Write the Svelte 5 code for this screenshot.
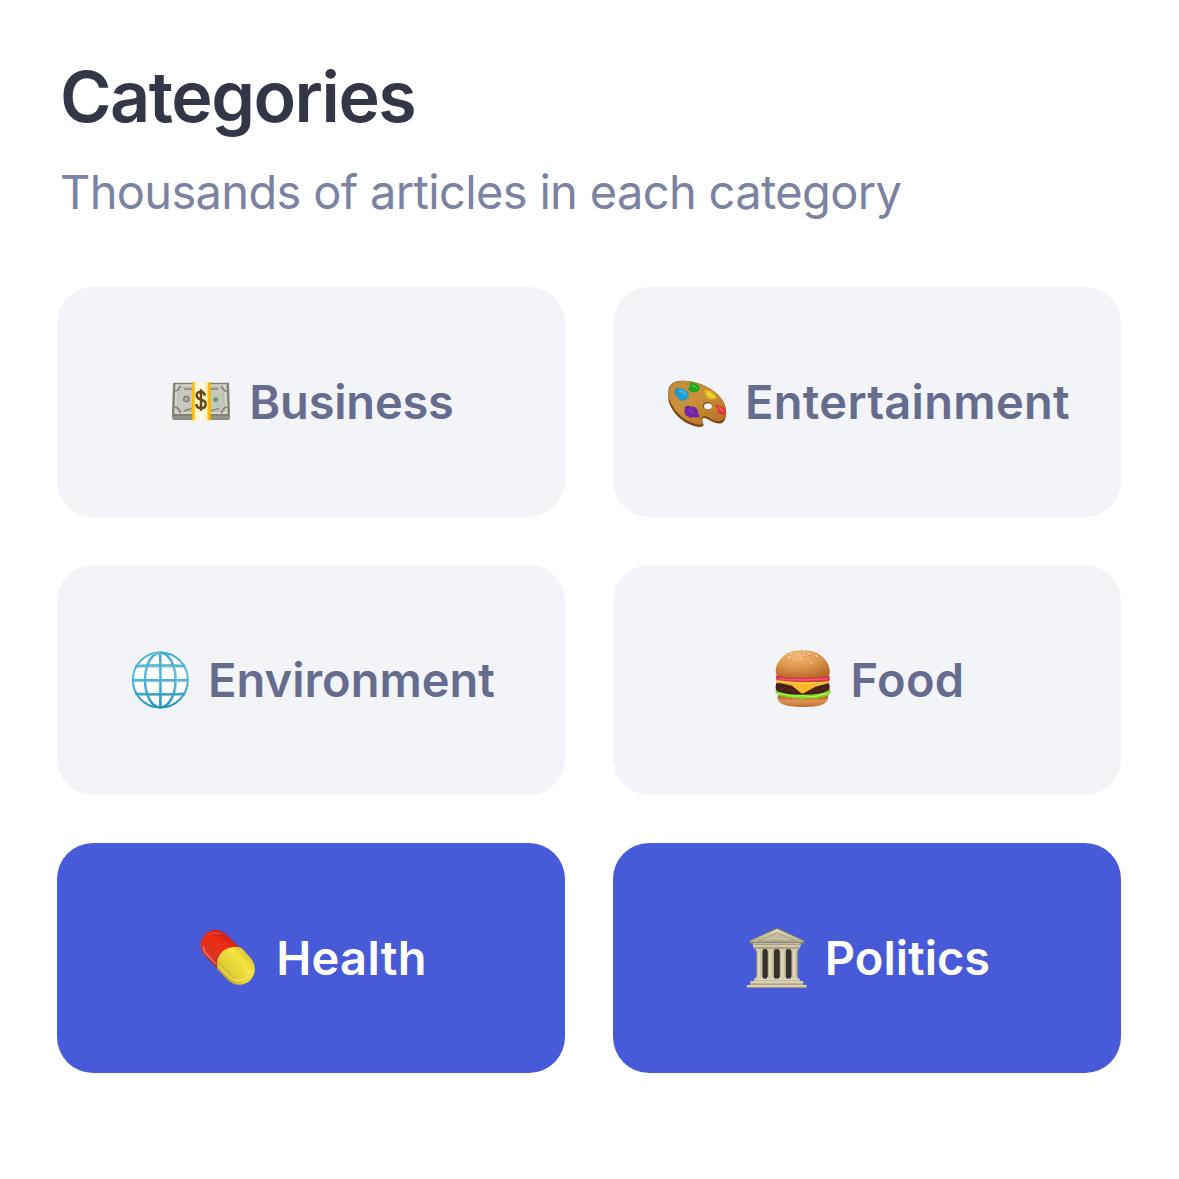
<script>
  const categories = [
    { name: 'Business', icon: 'money', box: '36 21 180 180' },
    { name: 'Entertainment', icon: 'palette', box: '39 21 180 180' },
    { name: 'Environment', icon: 'globe', box: '33 30 180 180' },
    { name: 'Food', icon: 'burger', box: '39 30 180 180' },
    { name: 'Health', icon: 'pill', box: '27 30 180 180', selected: true },
    { name: 'Politics', icon: 'temple', box: '36 30 180 180', selected: true }
  ];
</script>

<main>
  <h1>Categories</h1>
  <p>Thousands of articles in each category</p>
  <div class="grid">
    {#each categories as c}
      <button class={['card', c.icon, c.selected && 'selected']}>
        <svg viewBox={c.box} aria-hidden="true">
          {#if c.icon === 'money'}
            <defs>
              <linearGradient id="band"><stop offset="0" stop-color="#f5b400" /><stop offset=".14" stop-color="#ffc817" /><stop offset=".18" stop-color="#fff3c9" /><stop offset=".5" stop-color="#fffdee" /><stop offset=".8" stop-color="#fff0c0" /><stop offset=".84" stop-color="#ffc20d" /><stop offset="1" stop-color="#f2ae00" /></linearGradient>
            </defs>
            <path d="M42 55L39 158Q40 165 46 165H207Q213 165 213 158L210 55Z" fill="#858c80" />
            <path d="M40 153H212M40 158H212" stroke="#a5aa9f" stroke-width="1.5" />
            <path d="M43 53H209L212 153H40Z" fill="#817f74" />
            <path d="M49 58H203L206 147H46Z" fill="#d6d5c8" />
            <path d="M59 66H193L197 139H55Z" fill="#c8c9bc" stroke="#a3a396" stroke-width="2" />
            <path d="M48 78Q61 76 64 62M188 62Q190 75 204 80M47 126Q62 129 64 145M187 145Q191 129 205 126" fill="none" stroke="#85847a" stroke-width="5" />
            <path d="M76 72H98M154 72H177" stroke="#606158" stroke-width="5" stroke-dasharray="4 2" />
            <path d="M75 138L98 130M156 137L181 130" stroke="#7e8075" stroke-width="4" />
            <circle cx="82" cy="102" r="8" fill="#b3b4a9" stroke="#777a70" stroke-width="4" />
            <circle cx="170" cy="104" r="9" fill="#8eae94" /><path d="M166 104H175M170 99V109" stroke="#3c9668" stroke-width="3" />
            <path d="M158 90H184M160 120H183" stroke="#b2c5ae" stroke-width="3" />
            <path d="M100 52H154L156 166H98Z" fill="url(#band)" />
            <path d="M138 92C136 84 132 80 126 80C118 80 113 85 113 91C113 99 119 102 126 104C135 106 140 110 140 117C140 126 134 130 126 130C118 130 113 125 112 117M126 73V137" fill="none" stroke="#654812" stroke-width="7.5" />
          {:else if c.icon === 'palette'}
            <defs><linearGradient id="wood" x2=".7" y2="1"><stop stop-color="#c08a3b" /><stop offset=".5" stop-color="#cb9039" /><stop offset="1" stop-color="#b77627" /></linearGradient></defs>
            <g>
              <path d="M43 76C46 54 68 45 97 48C137 51 179 70 203 102C219 123 220 151 211 167C204 178 190 177 178 172L158 161C150 157 142 160 145 168L149 179C148 187 134 187 121 183C83 174 42 133 43 94Z" fill="#794614" />
              <path d="M44 79C46 55 68 46 97 48C137 51 179 70 203 102C217 121 219 147 211 160C204 171 190 170 178 166L159 155C149 151 139 156 144 165L147 175C146 181 133 180 121 176C83 166 41 121 44 79Z" fill="url(#wood)" />
            </g>
            <path d="M57 103Q81 143 130 166M75 63Q120 58 171 102M131 111Q188 128 210 149" fill="none" stroke="#e0aa51" stroke-width="2" opacity=".5" />
            <ellipse cx="161" cy="122" rx="14" ry="11" fill="#754819" /><ellipse cx="162" cy="124" rx="12" ry="9" fill="#f2f4f8" />
            <path d="M64 71Q71 66 78 71Q86 69 92 76Q100 76 105 86Q106 94 100 100Q98 108 89 107Q78 109 76 102Q69 101 68 93L62 86Q61 78 64 71Z" fill="#219bd0" />
            <path d="M75 79Q86 76 96 90" fill="none" stroke="#46b9e2" stroke-width="5" />
            <path d="M107 55Q113 50 120 54Q130 54 134 62Q139 67 136 74Q132 83 122 81Q114 84 109 78Q101 78 103 70L108 65Z" fill="#22a41d" /><path d="M113 62Q126 61 128 72" fill="none" stroke="#43c42a" stroke-width="5" />
            <path d="M151 79Q155 72 163 77Q175 77 178 86Q184 87 187 96Q188 102 182 102Q174 106 166 101Q156 101 157 91Z" fill="#e2c320" /><path d="M161 84L180 96" stroke="#f6dc37" stroke-width="6" />
            <path d="M93 125Q103 120 112 125Q123 122 129 132Q133 138 132 145Q138 150 136 156Q126 159 117 157Q108 161 102 154Q92 153 94 145Q88 142 92 136Z" fill="#7325aa" /><path d="M103 133L120 145" stroke="#9138c1" stroke-width="5" />
            <path d="M184 122Q191 117 199 123Q209 124 213 134Q218 141 213 148Q206 152 200 147Q190 148 190 139L191 133Z" fill="#dc393b" /><path d="M194 126L208 141" stroke="#f46660" stroke-width="5" />
          {:else if c.icon === 'globe'}
            <defs><linearGradient id="blue" gradientUnits="userSpaceOnUse" x1="0" x2="0" y1="36" y2="205"><stop stop-color="#43a9cc" /><stop offset=".4" stop-color="#5bbbdc" /><stop offset="1" stop-color="#2594bb" /></linearGradient></defs>
            <circle cx="124" cy="120" r="83" fill="#fff" />
            <g fill="none" stroke="#c5d5dd" stroke-width="3" transform="translate(3 4)"><path d="M49 78H199M40 121H205M49 162H197M124 40V200" /></g>
            <g fill="none" stroke="url(#blue)" stroke-width="7.5">
              <circle cx="124" cy="120" r="82.5" stroke-width="6" /><ellipse cx="124" cy="120" rx="46" ry="82" />
              <path d="M49 78Q124 73 199 78M40 120Q124 122 208 120M49 161Q124 164 199 161M123 37Q125 120 124 204" />
            </g>
            <path d="M63 67Q88 40 122 39M168 79Q178 117 169 159" fill="none" stroke="#91e2f3" stroke-width="2" />
          {:else if c.icon === 'burger'}
            <defs>
              <radialGradient id="bun" cx=".4" cy=".2" r=".85"><stop stop-color="#f4bd78" /><stop offset=".5" stop-color="#df964b" /><stop offset="1" stop-color="#b7672a" /></radialGradient>
              <linearGradient id="base" x2="0" y2="1"><stop stop-color="#ae602b" /><stop offset=".5" stop-color="#e09351" /><stop offset="1" stop-color="#bc7034" /></linearGradient>
            </defs>
            <path d="M53 166H204C207 194 182 201 128 201C75 201 49 193 53 166Z" fill="url(#base)" />
            <path d="M47 150Q126 137 209 147Q214 155 209 160Q207 168 198 167Q191 175 182 171Q169 179 159 173Q147 178 135 175Q122 183 112 174Q100 178 92 171Q77 178 72 167Q60 175 56 163Q44 162 47 150Z" fill="#77d51c" />
            <path d="M52 160Q72 160 82 165T113 168T146 169T176 167T204 158" fill="none" stroke="#b6f25d" stroke-width="4" />
            <path d="M49 129Q128 116 206 129Q214 147 202 153Q184 164 127 164Q70 164 51 153Q44 145 49 129Z" fill="#432017" />
            <path d="M58 143L67 147L76 142L85 151L93 148L102 157M153 155L164 147L175 154L188 143L198 145" fill="none" stroke="#6a3525" stroke-width="4" stroke-dasharray="5 4" />
            <path d="M49 105Q128 113 207 106Q213 122 204 125Q128 133 52 124Q46 118 49 105Z" fill="#d93647" /><path d="M54 116Q128 124 203 116" fill="none" stroke="#f0636d" stroke-width="4" />
            <path d="M48 120Q128 131 207 124L208 129L166 140L131 160Q126 162 119 156L96 137L48 127Z" fill="#fcb729" /><path d="M52 124Q128 134 201 127" fill="none" stroke="#ffd760" stroke-width="3" />
            <path d="M48 102C45 83 52 65 68 51C84 33 109 31 132 31C162 31 187 44 201 67C209 80 212 99 207 105C199 111 172 113 128 113C86 113 56 111 48 102Z" fill="url(#bun)" />
            <g stroke="#b67435" stroke-width="6" stroke-linecap="round"><path d="M86 55l4-3M92 44l3-2M111 44l2 3M130 36l4 1M133 47l1 0M123 57l1 3M147 41l2 3M168 48l3 3M155 70l-1 3" /></g>
            <g stroke="#fae0b0" stroke-width="5" stroke-linecap="round"><path d="M86 54l4-3M92 43l3-2M111 43l2 3M130 35l4 1M133 46l1 0M123 56l1 3M147 40l2 3M168 47l3 3M155 69l-1 3" /></g>
          {:else if c.icon === 'pill'}
            <defs>
              <linearGradient id="red" x1=".8" y1="0" x2=".2" y2="1"><stop stop-color="#b41712" /><stop offset=".35" stop-color="#ee2b14" /><stop offset=".72" stop-color="#d73622" /><stop offset="1" stop-color="#9b1b20" /></linearGradient>
              <linearGradient id="yellow" x1="1" y1=".1" x2=".1" y2=".9"><stop stop-color="#bfa81c" /><stop offset=".35" stop-color="#f4e443" /><stop offset=".7" stop-color="#e2cf35" /><stop offset="1" stop-color="#a9931c" /></linearGradient>
            </defs>
            <path d="M46 111C29 91 32 62 52 46C74 29 99 36 114 51L152 89L86 154Z" fill="url(#red)" />
            <path d="M84 152C82 128 89 109 105 97C119 87 137 85 151 88Q160 90 167 99L185 120C203 141 201 170 183 188C163 206 135 203 117 187Z" fill="url(#yellow)" />
            <path d="M44 87Q43 95 50 105L80 137" fill="none" stroke="#ff9287" stroke-width="4" opacity=".7" stroke-linecap="round" />
            <path d="M91 146L116 172Q132 190 151 187Q177 184 182 157" fill="none" stroke="#fff180" stroke-width="4" opacity=".7" stroke-linecap="round" />
            <path d="M59 51Q75 39 97 48" fill="none" stroke="#ff7668" stroke-width="3" opacity=".6" />
          {:else}
            <defs>
              <linearGradient id="column"><stop stop-color="#a29c80" /><stop offset=".4" stop-color="#e8e1c2" /><stop offset="1" stop-color="#aaa387" /></linearGradient>
              <linearGradient id="stone" x2="0" y2="1"><stop stop-color="#e5dec1" /><stop offset="1" stop-color="#b3ab8e" /></linearGradient>
            </defs>
            <path d="M70 92H184V181H70Z" fill="#332f2b" />
            <path d="M126 29L210 68L207 77H45L42 68Z" fill="#827c68" />
            <path d="M126 33L207 69L204 73H48L45 69Z" fill="url(#stone)" />
            <path d="M126 42L180 67H72Z" fill="#c5be9f" /><path d="M126 44L71 69H182Z" fill="none" stroke="#958e78" stroke-width="2" />
            <path d="M54 76H197V83L192 94H60L54 86Z" fill="url(#stone)" /><path d="M57 79H195M60 90H191" stroke="#91896c" stroke-width="2.5" />
            {#each [64, 98, 134, 169] as x}
              <rect {x} y="94" width="19" height="87" fill="url(#column)" /><rect x={x - 2} y="93" width="22" height="5" fill="#d5cdad" /><rect x={x - 2} y="177" width="22" height="6" fill="#d5cdad" />
            {/each}
            <path d="M57 183H195V190H205V201H215V210H36V201H46V190H57Z" fill="#c3bb9b" />
            <path d="M57 184H195M47 192H204M37 203H214" stroke="#e0d9bd" stroke-width="4" /><path d="M48 199H204M37 209H215" stroke="#91896f" stroke-width="2" />
          {/if}
        </svg>
        <span>{c.name}</span>
      </button>
    {/each}
  </div>
</main>

<style>
  :global(body) { margin: 0; background: #fff; }
  main {
    box-sizing: border-box;
    height: 1179px;
    padding: 53px 58px 0 57px;
    font-family: Inter, "Liberation Sans", sans-serif;
  }
  h1 {
    margin: 0 0 0 3px;
    font-size: 70px;
    line-height: 88px;
    font-weight: 600;
    letter-spacing: -1.5px;
    color: #333647;
  }
  p {
    margin: 22px 0 0 3px;
    font-size: 47px;
    line-height: 58px;
    letter-spacing: -0.66px;
    color: #7c82a1;
    white-space: nowrap;
  }
  .grid {
    display: grid;
    grid-template-columns: repeat(2, 508px);
    grid-auto-rows: 230px;
    gap: 48px;
    margin-top: 66px;
  }
  .card {
    display: flex;
    align-items: center;
    justify-content: center;
    gap: 18px;
    padding: 0 0 0 3px;
    border: 0;
    border-radius: 36px;
    background: #f2f4f8;
    color: #666c8e;
    font: 600 47px/60px Inter, "Liberation Sans", sans-serif;
    letter-spacing: 0.3px;
  }
  .money { letter-spacing: -0.2px; }
  .globe, .temple { letter-spacing: 0; }
  .selected { background: #475ad7; color: #fff; }
  svg { flex: none; width: 60px; height: 60px; }
</style>
